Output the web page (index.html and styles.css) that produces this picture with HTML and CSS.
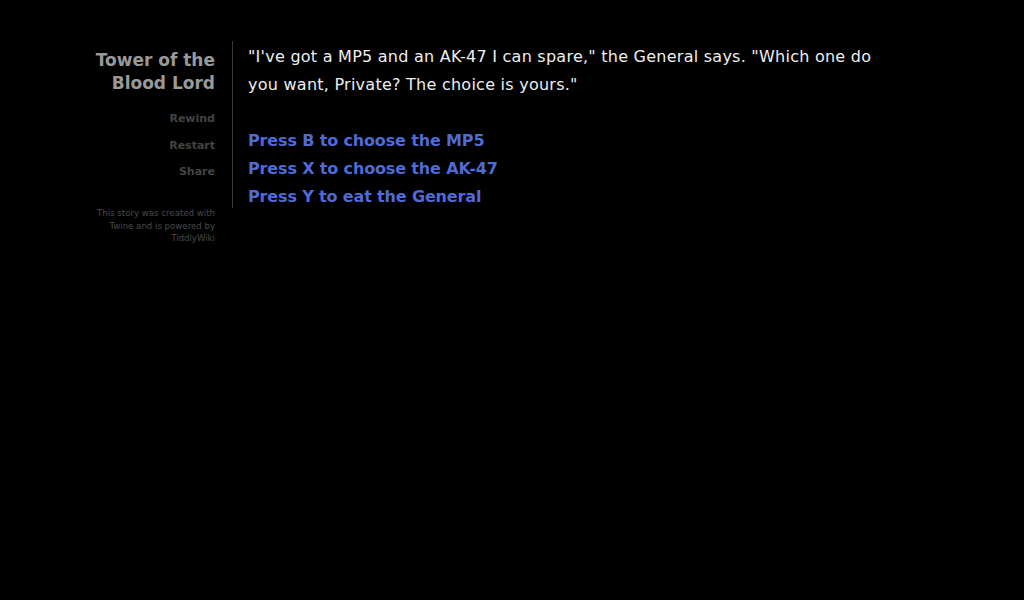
FILE: index.html
```html
<!DOCTYPE html>
<html>
<head>
<meta charset="utf-8">
<title>Tower of the Blood Lord</title>
<link rel="stylesheet" href="styles.css">
</head>
<body>
<div class="page">
  <div class="sidebar">
    <h1 class="title">Tower of the Blood Lord</h1>
    <ul class="menu">
      <li>Rewind</li>
      <li>Restart</li>
      <li>Share</li>
    </ul>
    <p class="credits">This story was created with Twine and is powered by TiddlyWiki</p>
  </div>
  <div class="passage">
    <p class="body-text">"I've got a MP5 and an AK-47 I can spare," the General says. "Which one do you want, Private? The choice is yours."</p>
    <ul class="choices">
      <li><a class="choice">Press B to choose the MP5</a></li>
      <li><a class="choice">Press X to choose the AK-47</a></li>
      <li><a class="choice">Press Y to eat the General</a></li>
    </ul>
  </div>
</div>
</body>
</html>
```
FILE: styles.css
```css
html, body {
  margin: 0;
  padding: 0;
  background: #000;
  height: 100%;
}
body {
  font-family: "DejaVu Sans", Verdana, sans-serif;
  color: #eee;
}
.page {
  display: flex;
  align-items: flex-start;
  padding: 41px 0 0 81px;
}
.sidebar {
  width: 134px;
  padding: 0 18px 0 0;
  text-align: right;
  position: relative;
}
.sidebar::after {
  content: "";
  position: absolute;
  right: 0;
  top: 0;
  width: 1px;
  height: 167px;
  background: #3a3a3a;
}
.title {
  margin: 8px 0 0;
  font-size: 17px;
  line-height: 23px;
  font-weight: bold;
  color: #999;
}
.menu {
  list-style: none;
  margin: 17px 0 0;
  padding: 0;
  font-size: 11px;
  font-weight: bold;
  color: #444;
}
.menu li {
  line-height: 13px;
  margin-bottom: 13.5px;
}
.credits {
  margin: 29px 0 0;
  font-size: 8.6px;
  line-height: 12.5px;
  color: #4a4a4a;
}
.passage {
  padding-left: 15px;
  width: 640px;
}
.body-text {
  margin: 2px 0 0;
  font-size: 16px;
  line-height: 28px;
  letter-spacing: 0.25px;
  color: #eee;
}
.choices {
  list-style: none;
  margin: 28px 0 0;
  padding: 0;
  font-size: 16px;
  line-height: 28px;
}
.choice {
  font-weight: bold;
  color: #4f6bd6;
  letter-spacing: -0.15px;
  cursor: pointer;
}
```
